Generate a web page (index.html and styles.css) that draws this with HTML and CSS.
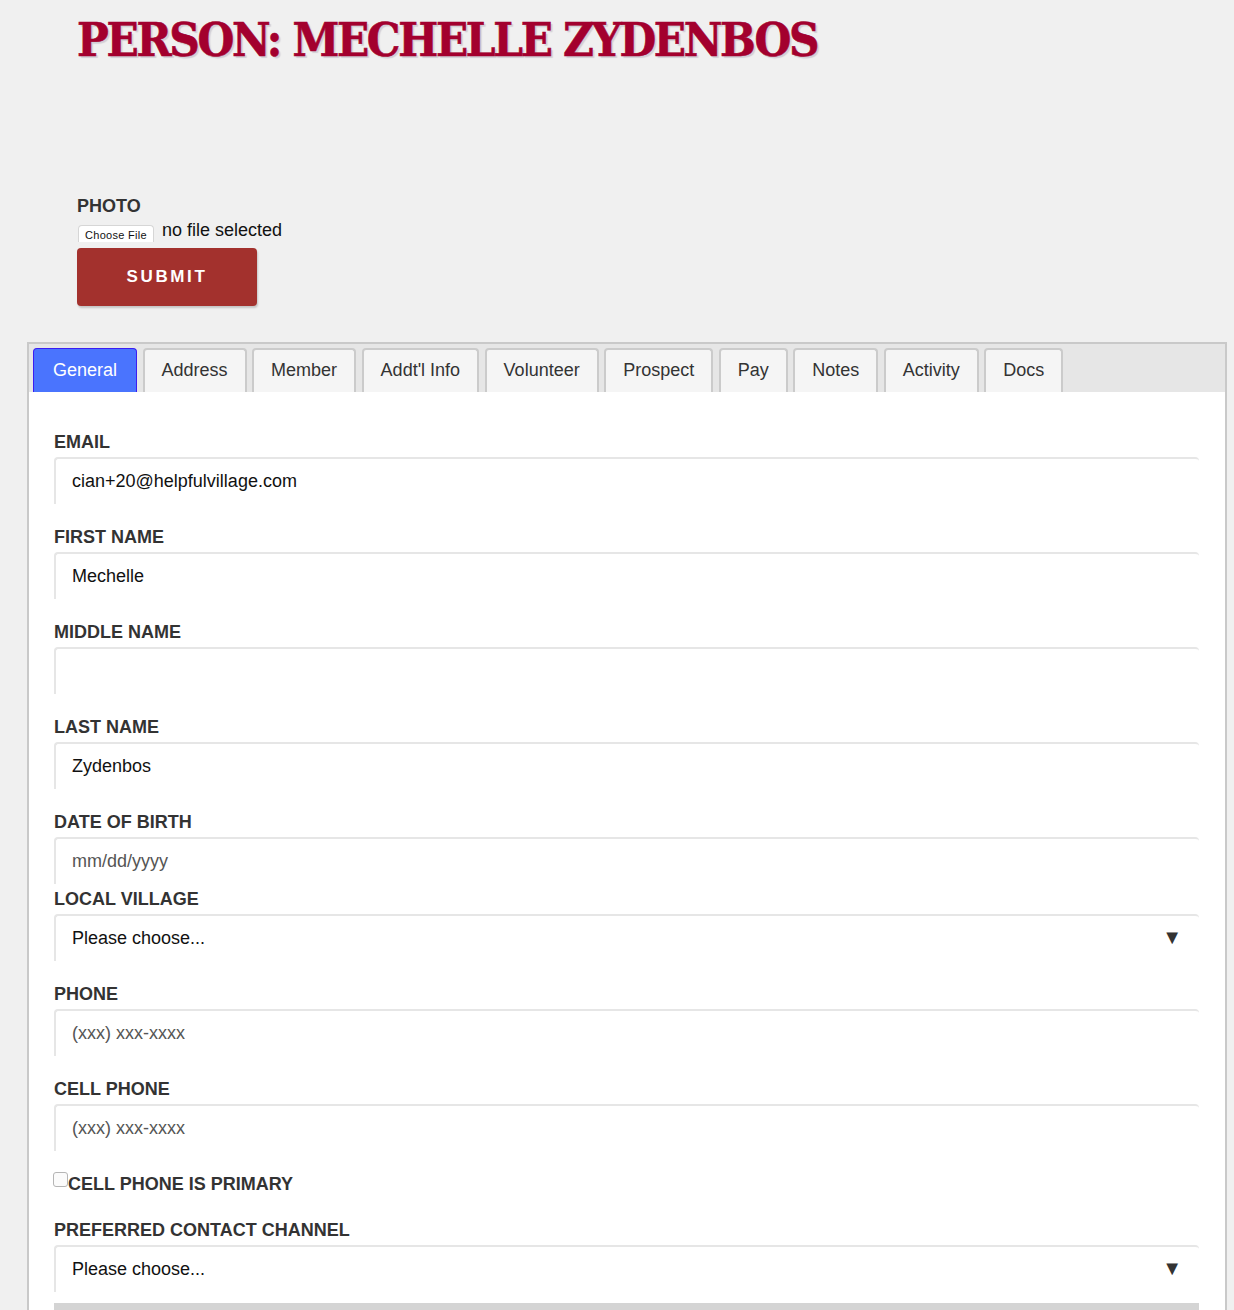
FILE: index.html
```html
<!DOCTYPE html>
<html lang="en">
<head>
    <meta charset="UTF-8">
    <meta name="viewport" content="width=device-width, initial-scale=1.0">
    <title>Person: Mechelle Zydenbos</title>
    <link rel="stylesheet" href="styles.css">
</head>
<body>

    <header class="page-header">
        <h1>Person: Mechelle Zydenbos</h1>
    </header>

    <form class="photo-form">
        <label class="field-label">Photo</label>
        <div class="file-row">
            <button type="button" class="choose-file">Choose File</button>
            <span class="file-status">no file selected</span>
        </div>
        <button type="submit" class="submit-btn">Submit</button>
    </form>

    <div class="tabs">
        <ul class="tab-strip">
            <li class="tab active">General</li>
            <li class="tab">Address</li>
            <li class="tab">Member</li>
            <li class="tab">Addt'l Info</li>
            <li class="tab">Volunteer</li>
            <li class="tab">Prospect</li>
            <li class="tab">Pay</li>
            <li class="tab">Notes</li>
            <li class="tab">Activity</li>
            <li class="tab">Docs</li>
        </ul>

        <div class="tab-panel">
            <div class="field">
                <label class="field-label" for="email">Email</label>
                <input class="text-input" type="text" id="email" value="cian+20@helpfulvillage.com">
            </div>
            <div class="field">
                <label class="field-label" for="firstName">First Name</label>
                <input class="text-input" type="text" id="firstName" value="Mechelle">
            </div>
            <div class="field">
                <label class="field-label" for="middleName">Middle Name</label>
                <input class="text-input" type="text" id="middleName">
            </div>
            <div class="field">
                <label class="field-label" for="lastName">Last Name</label>
                <input class="text-input" type="text" id="lastName" value="Zydenbos">
            </div>
            <div class="field field-tight">
                <label class="field-label" for="dob">Date of Birth</label>
                <input class="text-input" type="text" id="dob" placeholder="mm/dd/yyyy">
            </div>
            <div class="field">
                <label class="field-label" for="village">Local Village</label>
                <div class="select-wrap">
                    <select class="text-input" id="village">
                        <option>Please choose...</option>
                    </select>
                </div>
            </div>
            <div class="field">
                <label class="field-label" for="phone">Phone</label>
                <input class="text-input" type="text" id="phone" placeholder="(xxx) xxx-xxxx">
            </div>
            <div class="field">
                <label class="field-label" for="cellPhone">Cell Phone</label>
                <input class="text-input" type="text" id="cellPhone" placeholder="(xxx) xxx-xxxx">
            </div>
            <div class="check-row">
                <span class="checkbox"></span>
                <label class="field-label">Cell Phone is Primary</label>
            </div>
            <div class="field field-short">
                <label class="field-label" for="channel">Preferred Contact Channel</label>
                <div class="select-wrap">
                    <select class="text-input" id="channel">
                        <option>Please choose...</option>
                    </select>
                </div>
            </div>
            <div class="next-block"></div>
        </div>
    </div>

</body>
</html>
```

FILE: styles.css
```css
body {
    font-family: "Liberation Sans", Arial, sans-serif;
    background-color: #f0f0f0;
    color: #333;
    margin: 0;
    height: 1310px;
    overflow: hidden;
}
.page-header {
    padding: 10px 0 0 77px;
    height: 186px;
}
h1 {
    margin: 0;
    font-family: "DejaVu Serif Condensed", "DejaVu Serif", serif;
    font-weight: bold;
    font-size: 47px;
    line-height: 60px;
    letter-spacing: -2.3px;
    text-transform: uppercase;
    color: #a3002e;
    -webkit-text-stroke: 0.6px #a3002e;
    text-shadow: 2px 2px 1px #d2cfd6;
}
.photo-form {
    padding-left: 77px;
}
.field-label {
    display: block;
    font-size: 18px;
    line-height: 20px;
    font-weight: bold;
    text-transform: uppercase;
    color: #333;
    margin-bottom: 5px;
}
.file-row {
    display: flex;
    align-items: flex-start;
    height: 22px;
}
.choose-file {
    margin: 4px 8px 0 1px;
    height: 17px;
    padding: 0 6px;
    font-family: "Liberation Sans", Arial, sans-serif;
    font-size: 11px;
    line-height: 19px;
    letter-spacing: 0.3px;
    color: #111;
    background: #fff;
    border: 1px solid #d6d6d6;
    border-bottom: none;
    border-radius: 4px 4px 0 0;
}
.file-status {
    font-size: 18px;
    line-height: 18px;
    color: #111;
}
.submit-btn {
    display: block;
    margin-top: 5px;
    width: 180px;
    height: 58px;
    background-color: #a3312d;
    color: white;
    border: none;
    border-radius: 4px;
    box-shadow: 1px 2px 2px rgba(0, 0, 0, 0.18);
    font-family: "Liberation Sans", Arial, sans-serif;
    font-size: 17px;
    font-weight: bold;
    letter-spacing: 2.6px;
    text-transform: uppercase;
    cursor: pointer;
}
.tabs {
    margin: 36px 7px 0 27px;
    border: 2px solid #c9c9c9;
    border-bottom: none;
}
.tab-strip {
    display: flex;
    gap: 5.5px;
    margin: 0;
    padding: 4px 4px 0;
    list-style: none;
    background-color: #e6e6e6;
}
.tab {
    height: 42px;
    padding: 0 17px;
    line-height: 40px;
    font-size: 18px;
    color: #333;
    background-color: #f5f5f5;
    border: 2px solid #cbcbcb;
    border-bottom: none;
    border-radius: 4px 4px 0 0;
}
.tab.active {
    height: 43px;
    padding: 0 19px;
    line-height: 42px;
    color: white;
    background-color: #4a74fe;
    border: 1px solid #3a1df2;
    border-bottom: none;
}
.tab-panel {
    background-color: white;
    padding: 40px 26px 0 25px;
    height: 900px;
}
.field {
    margin-bottom: 23px;
}
.field-tight {
    margin-bottom: 5px;
}
.field-short {
    margin-bottom: 11px;
}
.text-input {
    display: block;
    width: 100%;
    height: 47px;
    box-sizing: border-box;
    padding: 0 16px;
    border: none;
    border-top: 2px solid #e6e6e6;
    border-left: 2px solid #e6e6e6;
    border-radius: 4px 4px 0 0;
    background: white;
    font-family: "Liberation Sans", Arial, sans-serif;
    font-size: 18px;
    color: #111;
    outline: none;
}
.text-input::placeholder {
    color: #555;
}
select.text-input {
    appearance: none;
    -webkit-appearance: none;
    padding-bottom: 1px;
}
.select-wrap {
    position: relative;
}
.select-wrap::after {
    content: "\25BC";
    position: absolute;
    right: 17px;
    top: 12px;
    font-size: 20px;
    color: #333;
    pointer-events: none;
}
.check-row {
    display: flex;
    align-items: flex-start;
    margin-bottom: 26px;
}
.check-row .field-label {
    margin-bottom: 0;
}
.checkbox {
    width: 13px;
    height: 13px;
    margin: -2px 0 0 -1px;
    border: 1px solid #b5b5b5;
    border-radius: 3px;
    background: #fbfbfb;
}
.next-block {
    height: 40px;
    background-color: #d4d4d4;
}
```
